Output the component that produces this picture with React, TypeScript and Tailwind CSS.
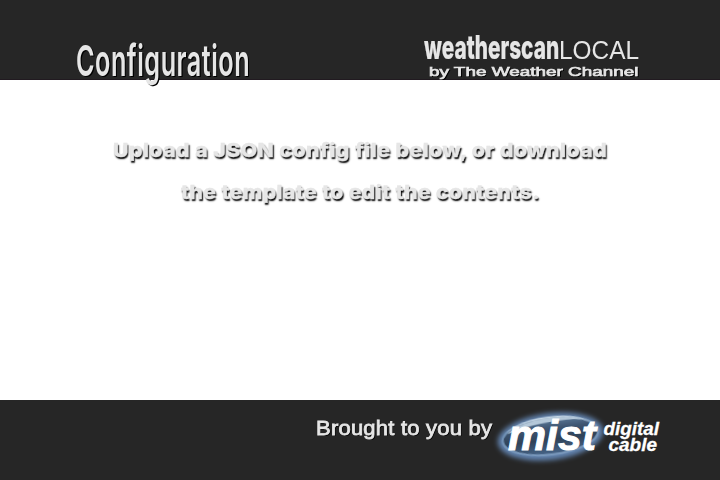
import { useLayoutEffect, useRef, useState } from "react";

type FitProps = { text: string; width: number; className?: string };

/** A single line of text stretched or condensed horizontally to a set width. */
function Fit({ text, width, className = "" }: FitProps) {
  const ref = useRef<HTMLSpanElement>(null);
  const [scale, setScale] = useState(1);
  useLayoutEffect(() => {
    if (ref.current) setScale(width / ref.current.offsetWidth);
  }, [width, text]);
  return (
    <span className="block" style={{ width }}>
      <span
        ref={ref}
        className={`inline-block origin-left whitespace-nowrap ${className}`}
        style={{ transform: `scaleX(${scale})` }}
      >
        {text}
      </span>
    </span>
  );
}

function NetworkLogo() {
  return (
    <div className="w-[216px] pt-[33px]">
      <div className="flex h-[30px] items-baseline">
        <Fit
          text="weatherscan"
          width={135}
          className="text-[33px] leading-[28px] font-extrabold [-webkit-text-stroke:0.2px_#e6e6e6]"
        />
        <Fit text="LOCAL" width={80} className="font-['Liberation_Sans',sans-serif] text-[25px] leading-[28px]" />
      </div>
      <div className="h-[14px] pl-[5px] leading-[14px]">
        <Fit
          text="by The Weather Channel"
          width={210}
          className="font-['Liberation_Sans',sans-serif] text-[13.5px] leading-[14px] [-webkit-text-stroke:0.7px_#e6e6e6] [text-shadow:1px_1px_0_#000]"
        />
      </div>
    </div>
  );
}

function MistLogo() {
  return (
    <svg className="h-[80px] w-[180px]" viewBox="490 400 180 80">
      <defs>
        <filter id="glow" x="-30%" y="-50%" width="160%" height="200%">
          <feGaussianBlur stdDeviation="2.4" />
        </filter>
        <filter id="soft" x="-20%" y="-20%" width="140%" height="140%">
          <feGaussianBlur stdDeviation="0.7" />
        </filter>
        <linearGradient id="disc" x1="0" y1="0" x2="0" y2="1">
          <stop offset="0" stopColor="#5f7d9d" />
          <stop offset="0.3" stopColor="#3d5470" />
          <stop offset="0.6" stopColor="#2f4258" />
          <stop offset="1" stopColor="#48668a" />
        </linearGradient>
        <linearGradient id="rim" x1="0" y1="0" x2="0" y2="1">
          <stop offset="0" stopColor="#c3d5e4" />
          <stop offset="0.3" stopColor="#6f8fb2" />
          <stop offset="1" stopColor="#7b9abd" />
        </linearGradient>
      </defs>
      <g transform="rotate(-7 550.5 436.5)">
        <ellipse cx="550.5" cy="436.5" rx="53" ry="23.5" fill="#6283af" filter="url(#glow)" />
        <ellipse cx="550.5" cy="436" rx="48" ry="18.5" fill="url(#disc)" stroke="url(#rim)" strokeWidth="2" filter="url(#soft)" />
        <path d="M508 429 C522 417 562 414 586 423 C562 420 530 422 508 429Z" fill="#b4c8d9" filter="url(#soft)" />
      </g>
      <g
        fontFamily="Liberation Sans, Arial, sans-serif"
        fontWeight="700"
        fontStyle="italic"
        fill="#fff"
        stroke="#fff"
      >
        <text x="508" y="450" fontSize="43" strokeWidth="1" textLength="88" lengthAdjust="spacingAndGlyphs">mist</text>
        <text x="603.5" y="435" fontSize="18.5" strokeWidth="0.3" textLength="55.5" lengthAdjust="spacingAndGlyphs">digital</text>
        <text x="608.5" y="451" fontSize="18.5" strokeWidth="0.3" textLength="48.5" lengthAdjust="spacingAndGlyphs">cable</text>
      </g>
    </svg>
  );
}

export default function App() {
  return (
    <div className="flex h-[480px] w-[720px] flex-col overflow-hidden bg-white font-[Inter,'Liberation_Sans',sans-serif] text-[#e6e6e6]">
      <header className="flex h-[80px] justify-between border-b border-[#211a20] bg-[#262626] pr-[80px] pl-[76px]">
        <h1 className="pt-[33px]">
          <Fit
            text="Configuration"
            width={174}
            className="text-[43px] leading-[54px] font-semibold tracking-[0.02em] [text-shadow:2px_1px_0_#000]"
          />
        </h1>
        <NetworkLogo />
      </header>
      <main className="flex h-[320px] flex-col items-center pt-[50px]">
        <Fit
          text="Upload a JSON config file below, or download"
          width={494}
          className="text-[19px] leading-[42px] font-extrabold tracking-[0.02em] [-webkit-text-stroke:0.3px_#e6e6e6] [text-shadow:1px_2px_1.5px_#000]"
        />
        <Fit
          text="the template to edit the contents."
          width={359}
          className="text-[19px] leading-[42px] font-extrabold tracking-[0.02em] [-webkit-text-stroke:0.3px_#e6e6e6] [text-shadow:1px_2px_1.5px_#000]"
        />
      </main>
      <footer className="flex h-[80px] bg-[#262626] pl-[316px]">
        <div className="w-[174px] pt-[13px]">
          <Fit
            text="Brought to you by"
            width={176}
            className="font-['Liberation_Sans',sans-serif] text-[21px] leading-[30px] tracking-[0.01em] [-webkit-text-stroke:0.8px_#e6e6e6] [text-shadow:1px_1px_0_#000]"
          />
        </div>
        <MistLogo />
      </footer>
    </div>
  );
}
